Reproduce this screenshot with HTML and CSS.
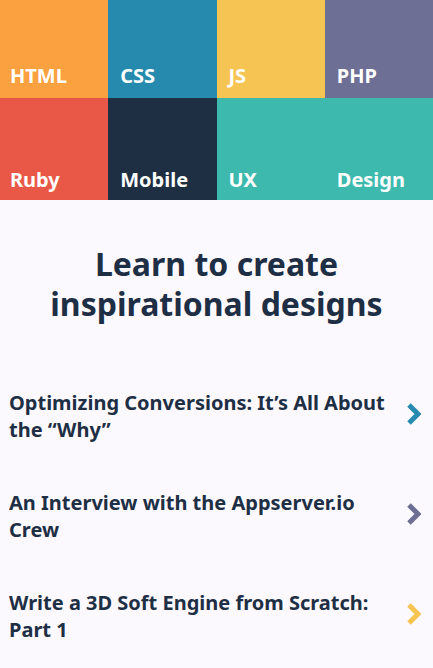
FILE: index.html
```html
<!DOCTYPE html>
<html lang="en">
<head>
<meta charset="utf-8">
<title>Learn</title>
<link rel="stylesheet" href="styles.css">
</head>
<body>
<nav class="tiles">
  <a class="tile t-html">HTML</a>
  <a class="tile t-css">CSS</a>
  <a class="tile t-js">JS</a>
  <a class="tile t-php">PHP</a>
  <a class="tile t-ruby">Ruby</a>
  <a class="tile t-mobile">Mobile</a>
  <a class="tile t-ux">UX</a>
  <a class="tile t-design">Design</a>
</nav>
<main>
  <h1 class="title">Learn to create inspirational designs</h1>
  <ul class="articles">
    <li class="article">
      <span class="article-title">Optimizing Conversions: It’s All About the “Why”</span>
      <svg class="chev" viewBox="0 0 14 22"><path d="M2 2 L11 11 L2 20" fill="none" stroke="#268bae" stroke-width="5"/></svg>
    </li>
    <li class="article">
      <span class="article-title">An Interview with the Appserver.io Crew</span>
      <svg class="chev" viewBox="0 0 14 22"><path d="M2 2 L11 11 L2 20" fill="none" stroke="#6d6e93" stroke-width="5"/></svg>
    </li>
    <li class="article">
      <span class="article-title">Write a 3D Soft Engine from Scratch: Part 1</span>
      <svg class="chev" viewBox="0 0 14 22"><path d="M2 2 L11 11 L2 20" fill="none" stroke="#f6c450" stroke-width="5"/></svg>
    </li>
  </ul>
</main>
</body>
</html>
```
FILE: styles.css
```css
* { box-sizing: border-box; }
html, body { margin: 0; padding: 0; }
body {
  background: #fbf9fd;
  font-family: "Noto Sans", "Open Sans", sans-serif;
  color: #1e2f45;
  width: 433px;
}
.tiles {
  display: grid;
  grid-template-columns: repeat(4, 1fr);
  grid-template-rows: 98px 102px;
}
.tile {
  display: flex;
  align-items: flex-end;
  padding: 0 10px 8px 12px;
  color: #fff;
  font-weight: 700;
  font-size: 20px;
  line-height: 28px;
}
.t-html { background: #fba13f; padding-left: 10px; }
.t-css { background: #268aae; }
.t-js { background: #f6c453; }
.t-php { background: #6d6f94; }
.t-ruby { background: #e95846; padding-left: 10px; padding-bottom: 6px; }
.t-mobile { background: #1e2f43; padding-bottom: 6px; }
.t-ux { background: #3db9ae; padding-bottom: 6px; }
.t-design { background: #3db9ae; padding-bottom: 6px; }
main { padding: 0 0 0 9px; }
.title {
  margin: 44px 0 0 -9px;
  text-align: center;
  font-size: 32px;
  line-height: 40px;
  font-weight: 700;
  padding: 0 40px;
}
.articles {
  list-style: none;
  margin: 65px 0 0;
  padding: 0;
}
.article {
  display: flex;
  justify-content: space-between;
  align-items: flex-start;
  height: 100px;
  padding-right: 12px;
}
.article-title {
  font-size: 20px;
  line-height: 27px;
  font-weight: 700;
  width: 390px;
}
.chev { width: 14px; height: 22px; margin-top: 14px; flex: none; }
```
